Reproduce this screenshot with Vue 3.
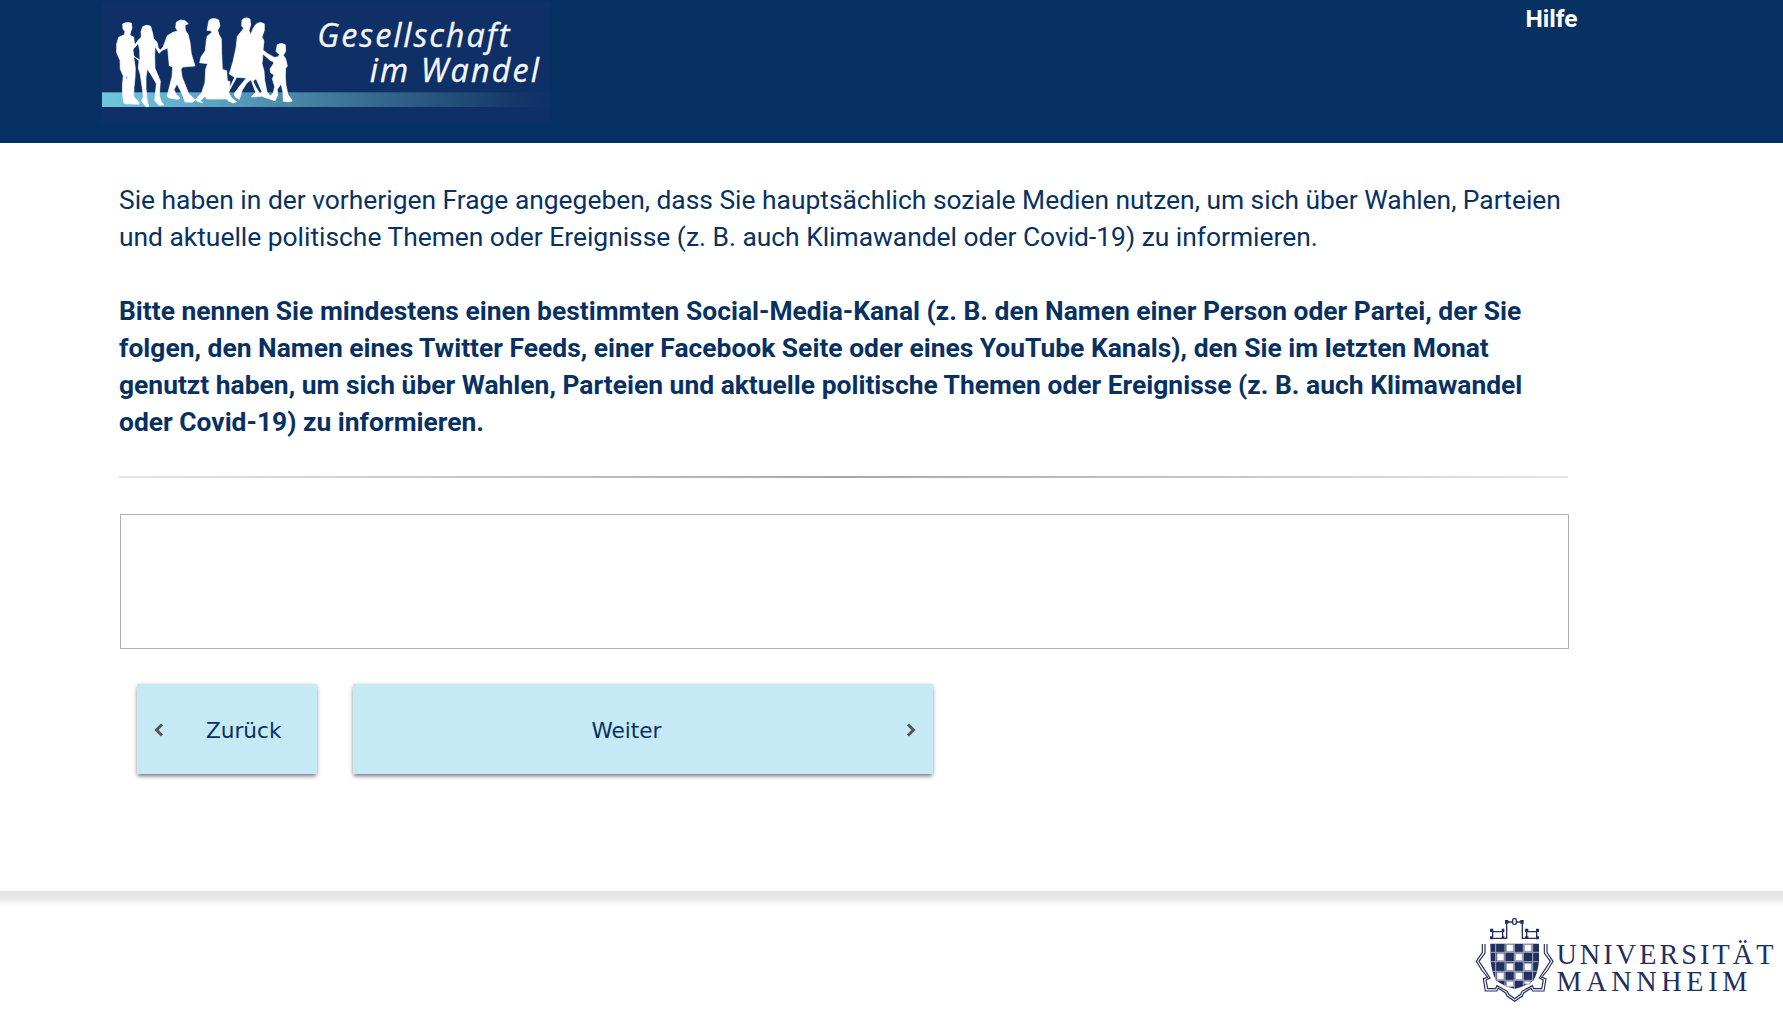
<script setup>
const introLines = [
  'Sie haben in der vorherigen Frage angegeben, dass Sie hauptsächlich soziale Medien nutzen, um sich über Wahlen, Parteien',
  'und aktuelle politische Themen oder Ereignisse (z. B. auch Klimawandel oder Covid-19) zu informieren.'
]
const questionLines = [
  'Bitte nennen Sie mindestens einen bestimmten Social-Media-Kanal (z. B. den Namen einer Person oder Partei, der Sie',
  'folgen, den Namen eines Twitter Feeds, einer Facebook Seite oder eines YouTube Kanals), den Sie im letzten Monat',
  'genutzt haben, um sich über Wahlen, Parteien und aktuelle politische Themen oder Ereignisse (z. B. auch Klimawandel',
  'oder Covid-19) zu informieren.'
]
</script>

<template>
  <div class="page">
    <header class="header">
      <svg class="brand" viewBox="33 6 1350 363" role="img" aria-label="Gesellschaft im Wandel">
        <defs>
          <linearGradient id="band" x1="0" x2="1">
            <stop offset="0" stop-color="#6fc6e0" />
            <stop offset=".14" stop-color="#66b4d0" />
            <stop offset=".46" stop-color="#4682a2" />
            <stop offset=".72" stop-color="#2a587e" />
            <stop offset=".92" stop-color="#14386a" />
            <stop offset="1" stop-color="#0f3066" />
          </linearGradient>
        </defs>
        <rect x="33" y="6" width="1350" height="363" fill="#0f3066" />
        <rect x="36" y="277" width="1347" height="44" fill="url(#band)" />
        <g fill="#fff" stroke="#fff" stroke-width="2" stroke-linejoin="round">
          <path d="M98 72Q108 65 124 69L126 84L121 99L120 106L131 111L134 135L129 150L132 177L136 205L135 233L132 262L131 290L148 308L146 313L103 311L102 302L107 286L107 260L112 231L108 228L111 260L109 282L111 301L101 307L98 285L97 257L100 228L91 208L90 181L80 158L80 132L86 112L103 104L105 95L99 87Z" />
          <path d="M158 80Q171 72 182 79L189 104L190 115L201 127L205 144L211 150L224 137L235 122L238 128L217 151L207 160L195 139L194 171L195 205L211 243L208 286L213 304L222 315L207 316L194 302L197 273L199 251L184 225L172 207L168 231L168 266L172 302L176 319L169 321L154 303L160 290L156 258L151 224L145 204L147 182L136 173L127 161L131 169L150 180L149 151L145 130L132 145L127 145L145 120L154 111L153 95Z" />
          <path d="M259 67Q271 56 285 62L295 71L285 76L286 91L294 103L300 127L304 162L315 198L278 201L273 208L276 230L285 253L296 281L316 300L307 307L285 306L278 285L261 252L252 269L259 284L270 294L265 298L237 294L231 289L236 270L246 230L248 201L238 197L233 144L216 151L222 134L232 107L249 97L263 93L257 83Z" />
          <path d="M357 61Q370 50 386 60L390 78L383 91L387 104L394 116L395 160L397 208L410 212L412 242L420 245L415 297L350 297L346 288L331 303L338 308L321 304L317 298L335 278L345 248L347 208L353 191L329 188L333 171L346 152L349 121L352 108L365 98L363 92L351 91Z" />
          <path d="M456 60Q466 49 480 57L482 75L477 91L482 104L490 84L498 73Q509 63 523 72L523 91L516 111L522 123L519 150L533 161L549 170L559 177L554 186L542 182L519 162L516 191L522 213L524 241L531 276L541 288L556 302L539 297L515 289L484 291L497 277L483 239L470 250L457 270L448 298L436 291L432 282L447 261L469 234L440 232L415 277L425 294L440 305L430 309L415 303L409 294L412 276L425 251L434 232L418 222L430 181L438 144L442 109L455 93L461 84L455 78Z" />
          <path d="M562 134Q573 127 586 134L587 154L580 166L587 176L592 198L587 205L586 231L588 256L594 284L607 302L600 306L580 304L579 277L573 252L562 268L563 286L555 302L537 294L550 278L554 260L547 236L552 225L542 218L540 207L551 190L549 173L565 170L568 164L558 154Z" />
        </g>
        <path d="M498 238L490 243L498 260L509 278L515 276Z" fill="#13386b" />
        <g class="brand-text">
          <text x="682" y="142" textLength="576" lengthAdjust="spacing">Gesellschaft</text>
          <text x="839" y="245" textLength="508" lengthAdjust="spacing">im Wandel</text>
        </g>
      </svg>
      <a class="help">Hilfe</a>
    </header>

    <main class="content">
      <div class="text">
        <p class="intro"><span v-for="l in introLines" :key="l">{{ l }}</span></p>
        <p class="question"><span v-for="l in questionLines" :key="l">{{ l }}</span></p>
      </div>
      <div class="rule"></div>
      <textarea class="answer"></textarea>
      <div class="actions">
        <button class="btn back">
          <svg width="10" height="14" viewBox="0 0 10 14"><path d="M8 1.5L2.5 7L8 12.5" /></svg>
          <span>Zurück</span>
        </button>
        <button class="btn next">
          <span>Weiter</span>
          <svg width="10" height="14" viewBox="0 0 10 14"><path d="M2 1.5L7.5 7L2 12.5" /></svg>
        </button>
      </div>
    </main>

    <footer class="footer">
      <svg class="uni" viewBox="0 0 969 336" role="img" aria-label="Universität Mannheim">
        <g fill="none" stroke="#232f5e" stroke-width="4">
          <path d="M92 115H140V68M187 68V115H236M98 93V112M128 93V112M98 95H128M200 93V112M230 93V112M200 95H230M140 66H187" />
          <rect x="158" y="56" width="11" height="17" rx="4" fill="#fff" />
        </g>
        <g fill="#232f5e">
          <path d="M135 60h10v11h-10zM181 60h10v11h-10zM90 86h10v10h-10zM125 86h8v10h-8zM195 86h10v10h-10zM228 86h9v10h-9zM90 109h9v9h-9zM125 109h8v7h-8zM195 109h10v7h-10zM228 109h9v9h-9z" />
          <path d="M91 131H237V182Q234 216 221 241Q200 257 164 267Q128 257 108 241Q95 216 92 182Z" />
        </g>
        <g fill="#fff" stroke="#a3a9c0" stroke-width="3">
          <path d="M139 134h21v20h-21zM193 134h21v20h-21zM111 161h21v21h-21zM166 161h21v21h-21zM139 190h21v21h-21zM193 190h21v21h-21zM111 218h21v21h-21zM166 218h21v21h-21zM139 244h21v16h-21zM193 244h18v8h-18z" />
          <path d="M91 157H237M91 185H235M97 214H230M107 241H221M107 132V240M135 132V257M163 132V267M190 132V257M218 132V240" fill="none" />
        </g>
        <g fill="none" stroke="#232f5e" stroke-width="3.5">
          <path d="M67 132V157L49 184L65 210L83 232L70 236L76 273H110L115 265L137 279L141 288L164 304L187 288L191 279L213 265L218 273H252L258 236L245 232L263 210L279 184L261 157V132" />
          <path d="M75 132V159L57 184L71 205L90 234L78 240L83 266H107L111 257L142 274L146 283L164 296L182 283L186 274L217 257L221 266H245L250 240L238 234L257 205L271 184L253 159V132" />
        </g>
        <g class="uni-text" fill="#232f5e" transform="scale(.93 1)">
          <text x="311" y="192" textLength="700" lengthAdjust="spacing">UNIVERSITÄT</text>
          <text x="311" y="273" textLength="616" lengthAdjust="spacing">MANNHEIM</text>
        </g>
      </svg>
    </footer>
  </div>
</template>

<style>
body { margin: 0; background: #fff; overflow: hidden; }
</style>

<style scoped>
.page {
  height: 1012px;
  display: flex;
  flex-direction: column;
  overflow: hidden;
  font-family: Roboto, sans-serif;
  color: #083163;
}
.header {
  flex: none;
  box-sizing: border-box;
  height: 143px;
  padding: 2px 205.5px 0 101px;
  display: flex;
  justify-content: space-between;
  align-items: flex-start;
  background: #083163;
}
.brand { width: 450px; height: 121px; }
.brand-text {
  font: italic 97px "Open Sans", sans-serif;
  fill: #f5f6fa;
  stroke: #f5f6fa;
  stroke-width: 1;
}
.help { margin-top: 3px; font-size: 24.5px; line-height: 28px; font-weight: 700; color: #fff; }
.content { width: 1449px; padding: 39px 0 0 119px; }
.text { font-size: 26.4px; line-height: 37px; }
.text p { margin: 0; }
.text span { display: block; white-space: nowrap; }
.intro { letter-spacing: -.008px; }
.question { font-weight: 700; letter-spacing: .008px; }
.text .question { margin-top: 37px; }
.rule {
  height: 2px;
  margin-top: 35px;
  background: linear-gradient(90deg, #e5e5e5, #a8a8a8 50%, #e5e5e5);
}
.answer {
  display: block;
  box-sizing: border-box;
  width: 1449px;
  height: 135px;
  margin: 36px 0 0 1px;
  border: 1px solid #b0b0b0;
  background: #fff;
  resize: none;
  outline: none;
}
.actions { display: flex; gap: 36px; margin: 35px 0 0 18px; }
.btn {
  box-sizing: border-box;
  display: flex;
  align-items: center;
  height: 90px;
  padding: 2px 17px 0;
  border: 0;
  background: #c5e9f5;
  box-shadow: 0 3px 4px -1px rgba(0, 0, 0, .45), 0 1px 5px rgba(0, 0, 0, .2);
  color: #083163;
  font: 21.6px "DejaVu Sans", sans-serif;
}
.btn svg { flex: none; fill: none; stroke: #555; stroke-width: 3; }
.back { width: 180px; }
.back span { margin-left: 42px; }
.next { width: 580px; }
.next span { flex: 1; padding-right: 23px; text-align: center; }
.footer {
  margin-top: auto;
  height: 121px;
  display: flex;
  justify-content: flex-end;
  align-items: flex-end;
  background: linear-gradient(#e5e5e5 0, #e5e5e5 6px, #fff 15px);
}
.uni { width: 323px; height: 112px; }
.uni-text { font-family: "Liberation Serif", serif; font-size: 91px; }
</style>
